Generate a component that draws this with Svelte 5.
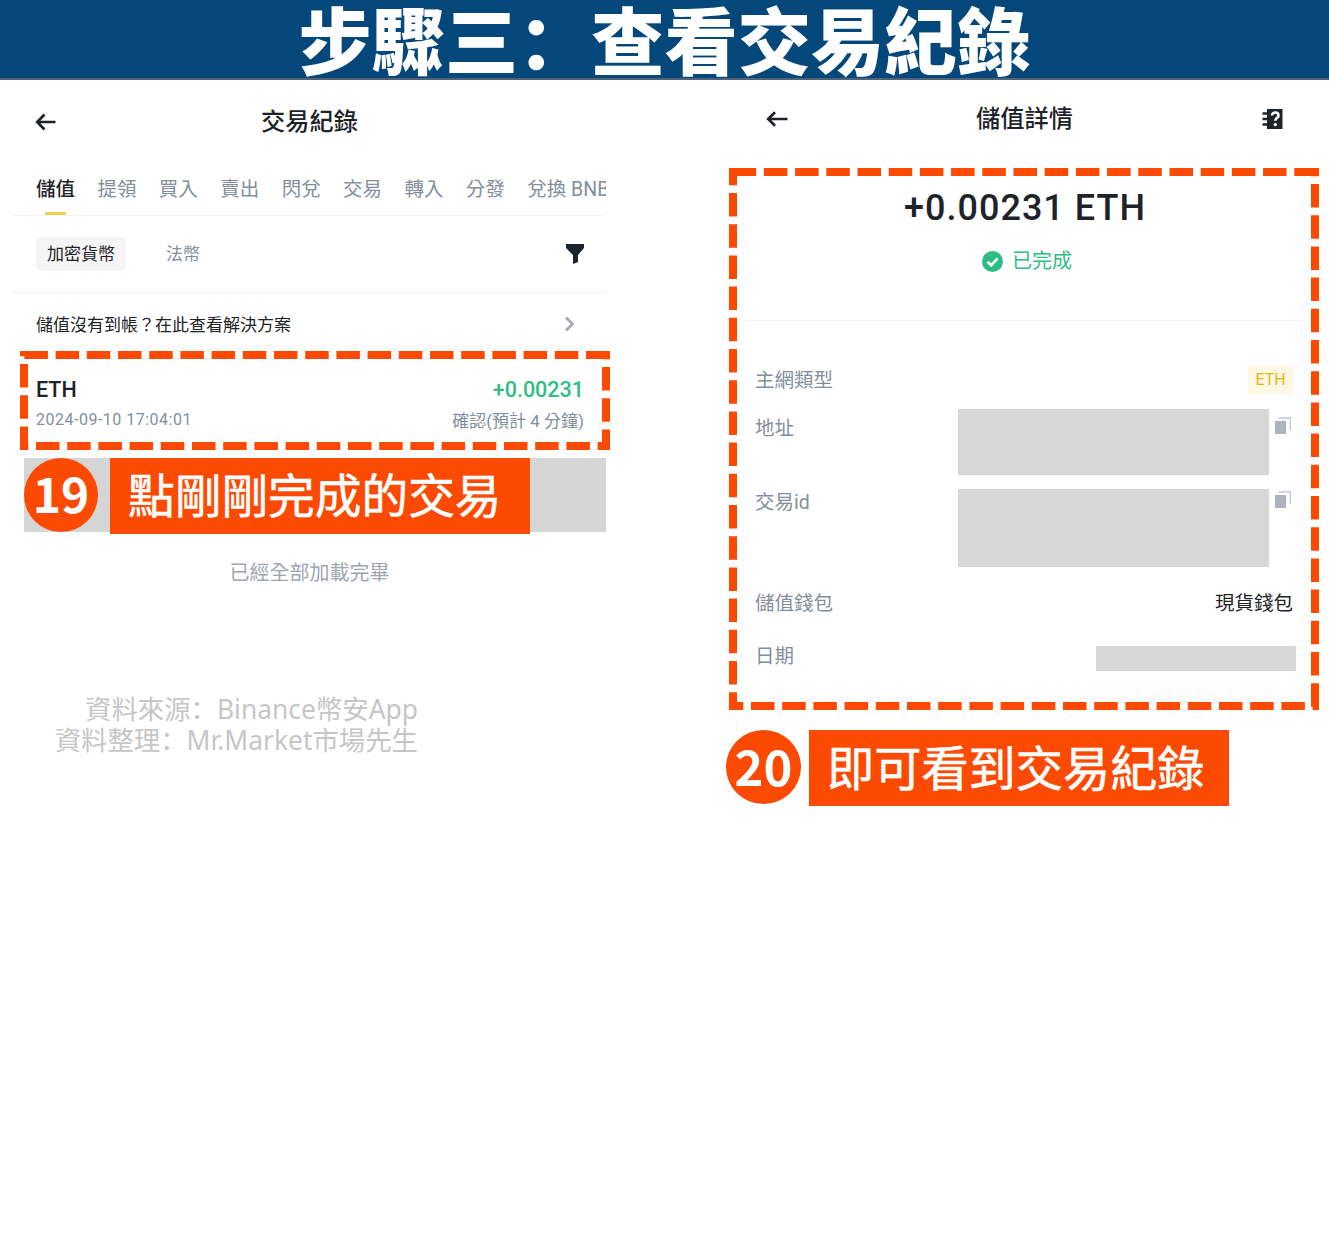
<script>
	const tabs = ['儲值', '提領', '買入', '賣出', '閃兌', '交易', '轉入', '分發', '兌換 BNB'];
</script>

<div class="page">
	<header class="banner"><h1>步驟三<span class="colon">&#xFF1A;</span>查看交易紀錄</h1></header>

	<main class="columns">
		<section class="list-panel">
			<div class="appbar list-bar">
				<svg class="back" width="21" height="18" viewBox="0 0 21 18"><path d="M20.5 9H2.5M9.5 1.5 2.2 9l7.3 7.5" /></svg>
				<h2>交易紀錄</h2>
				<span></span>
			</div>

			<nav class="tabs">
				{#each tabs as tab, i}
					<span class="tab" class:active={i === 0}>{tab}</span>
				{/each}
			</nav>

			<div class="filter-row">
				<span class="pill">加密貨幣</span>
				<span class="fiat">法幣</span>
				<svg class="filter" width="20" height="22" viewBox="0 0 20 22"><path d="M1 1h18v4l-6 7v7l-5 2v-9L1 5z" /></svg>
			</div>

			<div class="notice">
				<span>儲值沒有到帳&#xFF1F;在此查看解決方案</span>
				<svg width="11" height="16" viewBox="0 0 11 16"><path d="M2 1.5 8.5 8 2 14.5" /></svg>
			</div>

			<div class="tx">
				<!-- each side has its own dash phase -->
				<svg class="dash" width="590" height="99" viewBox="0 0 590 99">
					<path d="M0 4H590" stroke-dashoffset="-4.4" />
					<path d="M0 95H590" stroke-dashoffset="-16" />
					<path d="M4 0V99" stroke-dashoffset="-13" />
					<path d="M586 0V99" stroke-dashoffset="-16" />
				</svg>
				<div class="tx-line">
					<span class="coin">ETH</span>
					<span class="plus">+0.00231</span>
				</div>
				<div class="tx-line sub">
					<span class="when">2024-09-10 17:04:01</span>
					<span>確認(預計 4 分鐘)</span>
				</div>
			</div>

			<div class="band">
				<span class="num">19</span>
				<span class="label">點剛剛完成的交易</span>
			</div>

			<p class="done">已經全部加載完畢</p>

			<p class="credit">資料來源<span class="colon">&#xFF1A;</span>Binance幣安App<br />資料整理<span class="colon">&#xFF1A;</span>Mr.Market市場先生</p>
		</section>

		<section class="detail-panel">
			<div class="appbar detail-bar">
				<svg class="back" width="22" height="16" viewBox="0 0 22 16"><path d="M21.5 8H2.5M9 1.2 2.2 8 9 14.8" /></svg>
				<h2>儲值詳情</h2>
				<svg class="help" width="21" height="22" viewBox="0 0 21 22">
					<path class="book" d="M5 1h15.5v20H5z" />
					<path class="rings" d="M0.5 5.5H7M0.5 11H7M0.5 16.5H7" />
					<path class="mark" d="M10 7.5c0-4 6.5-4 6.5 0 0 2.7-3.2 2.5-3.2 5.2" />
					<circle class="dot" cx="13.3" cy="16.6" r="1.7" />
				</svg>
			</div>

			<div class="detail-box">
				<svg class="dash" width="590" height="542" viewBox="0 0 590 542">
					<path d="M0 4H590" stroke-dashoffset="-3.7" />
					<path d="M0 538H590" stroke-dashoffset="-22" />
					<path d="M4 0V542" stroke-dashoffset="-25" />
					<path d="M586 0V542" stroke-dashoffset="-16" />
				</svg>

				<div class="summary">
					<div class="amount">+0.00231 ETH</div>
					<div class="status">
						<svg width="21" height="21" viewBox="0 0 21 21">
							<circle cx="10.5" cy="10.5" r="10.5" />
							<path d="M5.6 10.8 9.2 14.3 15.6 7.4" />
						</svg>
						<span>已完成</span>
					</div>
				</div>

				<div class="rows">
					<div class="row network">
						<span class="key">主網類型</span>
						<span class="badge">ETH</span>
					</div>
					<div class="row addr">
						<span class="key">地址</span>
						<div class="value">
							<div class="mask addr-mask"></div>
							<svg class="copy" width="16" height="17" viewBox="0 0 16 17"><path class="back-sheet" d="M3.5 1h12v12" /><path class="front-sheet" d="M0 4h11v13H0z" /></svg>
						</div>
					</div>
					<div class="row txid">
						<span class="key">交易id</span>
						<div class="value">
							<div class="mask txid-mask"></div>
							<svg class="copy" width="16" height="17" viewBox="0 0 16 17"><path class="back-sheet" d="M3.5 1h12v12" /><path class="front-sheet" d="M0 4h11v13H0z" /></svg>
						</div>
					</div>
					<div class="row wallet">
						<span class="key">儲值錢包</span>
						<span class="val">現貨錢包</span>
					</div>
					<div class="row date">
						<span class="key">日期</span>
						<div class="mask date-mask"></div>
					</div>
				</div>
			</div>

			<div class="result">
				<span class="num big">20</span>
				<span class="label big-label">即可看到交易紀錄</span>
			</div>
		</section>
	</main>
</div>

<style>
	:global(body) {
		background: #fff;
	}

	.page {
		min-height: 1255px;
		font-family: Roboto, 'Noto Sans CJK TC', sans-serif;
		color: #1e2329;
		overflow: hidden;
	}

	.banner {
		height: 78px;
		background: #04477a;
		border-bottom: 2px solid #4f6478;
		display: flex;
		justify-content: center;
		align-items: flex-start;
	}

	.banner h1 {
		margin: 0;
		font-family: 'Noto Sans CJK TC', sans-serif;
		font-size: 73.2px;
		line-height: 74px;
		height: 78px;
		font-weight: 900;
		color: #fff;
		white-space: nowrap;
	}

	/* simplified-style colon sits to the left of its cell, as in the artwork */
	.colon {
		font-family: 'Noto Sans CJK SC', sans-serif;
		line-height: 0;
	}

	.columns {
		display: grid;
		grid-template-columns: 595px 590px;
		column-gap: 122px;
		padding-left: 12px;
	}

	h2 {
		margin: 0;
		font-size: 24.2px;
		font-weight: 500;
		line-height: 32px;
	}

	.appbar {
		display: grid;
		grid-template-columns: 1fr auto 1fr;
		align-items: center;
	}

	.back path {
		fill: none;
		stroke: #1e2329;
		stroke-width: 2.7;
	}

	.list-bar {
		height: 84px;
		padding: 0 23px;
	}

	.detail-bar {
		height: 78px;
		margin-bottom: 10px;
		padding: 0 36px 0 37px;
	}

	.help {
		justify-self: end;
	}

	.book {
		fill: #1e2329;
	}

	.rings {
		stroke: #1e2329;
		stroke-width: 2.4;
		fill: none;
	}

	.mark {
		fill: none;
		stroke: #fff;
		stroke-width: 2.6;
	}

	.dot {
		fill: #fff;
	}

	/* tabs */
	.tabs {
		height: 51px;
		margin-right: 1px;
		padding: 0 0 0 24px;
		display: flex;
		align-items: center;
		gap: 22.4px;
		border-bottom: 1px solid #f2f3f4;
		overflow: hidden;
		white-space: nowrap;
	}

	.tab {
		position: relative;
		font-size: 19.5px;
		line-height: 50px;
		color: #848e9c;
	}

	.tab.active {
		color: #1e2329;
		font-weight: 500;
	}

	.tab.active::after {
		content: '';
		position: absolute;
		left: 9px;
		bottom: 0;
		width: 21px;
		height: 3px;
		background: #f0d050;
	}

	.filter-row {
		height: 76px;
		display: flex;
		align-items: center;
		padding: 0 22px 0 24px;
		border-bottom: 1px solid #f2f3f4;
	}

	.pill {
		width: 90px;
		height: 34px;
		line-height: 34px;
		text-align: center;
		background: #f5f5f5;
		border-radius: 6px;
		font-size: 17px;
	}

	.fiat {
		margin-left: 40px;
		font-size: 17px;
		line-height: 30px;
		color: #848e9c;
	}

	.filter {
		margin-left: auto;
		fill: #1e2329;
	}

	.notice {
		height: 56px;
		padding: 2px 32px 0 24px;
		display: flex;
		align-items: center;
		justify-content: space-between;
		font-size: 17px;
	}

	.notice svg {
		margin-top: 1px;
	}

	.notice path {
		fill: none;
		stroke: #a4a9b0;
		stroke-width: 2.6;
	}

	/* dashed highlight frames */
	.dash {
		position: absolute;
		left: 0;
		top: 0;
		pointer-events: none;
	}

	.dash path {
		fill: none;
		stroke: #fc4a02;
		stroke-width: 8;
		stroke-dasharray: 23.5 7.7;
	}

	.tx {
		position: relative;
		margin-left: 8px;
		width: 590px;
		height: 99px;
		box-sizing: border-box;
		padding: 22px 26px 0 16px;
	}

	.tx-line {
		display: flex;
		justify-content: space-between;
		align-items: center;
		height: 32px;
		font-size: 21.5px;
	}

	.tx-line.sub {
		height: 28px;
		font-size: 17px;
		color: #848e9c;
	}

	.coin {
		font-weight: 500;
	}

	.plus {
		color: #2ebd85;
		font-weight: 500;
	}

	.when {
		font-size: 16px;
		letter-spacing: 0.5px;
	}

	.band {
		margin: 8px 0 0 12px;
		width: 582px;
		height: 74px;
		background: #d5d5d5;
		display: flex;
		gap: 12px;
	}

	.num {
		flex: none;
		width: 74px;
		height: 74px;
		border-radius: 50%;
		background: #fc4a02;
		color: #fff;
		font-family: 'Noto Sans CJK TC', sans-serif;
		font-size: 48px;
		font-weight: 700;
		line-height: 68px;
		text-align: center;
	}

	.label {
		flex: none;
		width: 420px;
		height: 76px;
		box-sizing: border-box;
		padding-left: 18px;
		background: #fc4a02;
		color: #fff;
		font-family: 'Noto Sans CJK TC', sans-serif;
		font-size: 46.7px;
		font-weight: 400;
		-webkit-text-stroke: 0.6px #fff;
		line-height: 69px;
		white-space: nowrap;
	}

	.done {
		margin: 26px 0 0;
		font-size: 20px;
		line-height: 30px;
		text-align: center;
		color: #a0a5ad;
	}

	.credit {
		margin: 106px 0 0;
		width: 406px;
		font-family: 'Noto Sans', 'Noto Sans CJK TC', sans-serif;
		font-size: 26.4px;
		line-height: 31px;
		text-align: right;
		color: #c6c6c6;
		white-space: nowrap;
	}

	/* detail side */
	.detail-box {
		position: relative;
		height: 542px;
	}

	.summary {
		margin: 0 14px 0 16px;
		height: 153px;
		box-sizing: border-box;
		padding-top: 18px;
		border-bottom: 1px solid #f2f3f4;
	}

	.amount {
		font-size: 36px;
		font-weight: 500;
		line-height: 44px;
		letter-spacing: 1px;
		text-align: center;
	}

	.status {
		margin-top: 15px;
		padding-left: 4px;
		display: flex;
		justify-content: center;
		align-items: center;
		gap: 9px;
		font-size: 20px;
		line-height: 32px;
		color: #2ebd85;
	}

	.status circle {
		fill: #2ebd85;
	}

	.status path {
		fill: none;
		stroke: #fff;
		stroke-width: 2.6;
	}

	.rows {
		padding: 45px 26px 0 26px;
		font-size: 19.5px;
	}

	.row {
		display: flex;
		justify-content: space-between;
		align-items: flex-start;
	}

	.key {
		line-height: 26px;
		padding-top: 1px;
		color: #848e9c;
	}

	.val {
		line-height: 28px;
		padding-top: 2px;
	}

	.network {
		height: 28px;
		align-items: center;
	}

	.badge {
		width: 45px;
		height: 28px;
		line-height: 28px;
		text-align: center;
		background: #fdf7e3;
		border-radius: 3px;
		font-size: 16px;
		color: #e0b90f;
	}

	.addr {
		margin-top: 15px;
		height: 66px;
	}

	.addr .key {
		margin-top: 6px;
	}

	.addr .copy {
		margin-top: 8px;
	}

	.txid {
		margin-top: 14px;
		height: 78px;
	}

	.txid .copy {
		margin-top: 2px;
	}

	.wallet {
		margin-top: 22px;
		height: 28px;
		align-items: center;
	}

	.date {
		margin-top: 26px;
	}

	.value {
		display: flex;
		gap: 6px;
		padding-right: 2px;
	}

	.mask {
		background: #d7d7d7;
	}

	.addr-mask {
		width: 311px;
		height: 66px;
	}

	.txid-mask {
		width: 311px;
		height: 78px;
	}

	.date-mask {
		width: 200px;
		height: 25px;
		margin: 3px -3px 0 0;
	}

	.back-sheet {
		fill: none;
		stroke: #c3c8ce;
		stroke-width: 1.6;
	}

	.front-sheet {
		fill: #aeb4bd;
	}

	.result {
		margin: 20px 0 0 -3px;
		display: flex;
		gap: 8px;
	}

	.big {
		width: 75px;
		font-size: 49px;
		line-height: 70px;
	}

	.big-label {
		padding-left: 18px;
		font-size: 47.2px;
		line-height: 71px;
	}
</style>
